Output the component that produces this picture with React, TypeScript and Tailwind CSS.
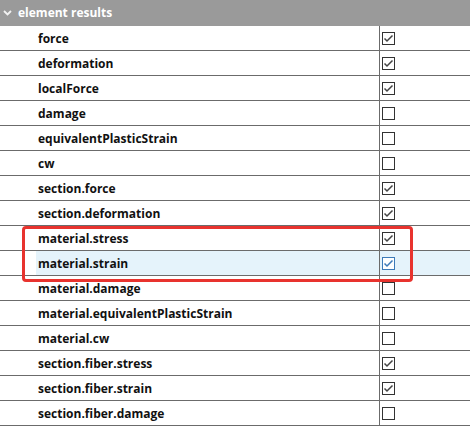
import React from "react";

const rows: { name: string; checked: boolean; selected?: boolean }[] = [
  { name: "force", checked: true },
  { name: "deformation", checked: true },
  { name: "localForce", checked: true },
  { name: "damage", checked: false },
  { name: "equivalentPlasticStrain", checked: false },
  { name: "cw", checked: false },
  { name: "section.force", checked: true },
  { name: "section.deformation", checked: true },
  { name: "material.stress", checked: true },
  { name: "material.strain", checked: true, selected: true },
  { name: "material.damage", checked: false },
  { name: "material.equivalentPlasticStrain", checked: false },
  { name: "material.cw", checked: false },
  { name: "section.fiber.stress", checked: true },
  { name: "section.fiber.strain", checked: true },
  { name: "section.fiber.damage", checked: false },
];

function Check({ checked, selected }: { checked: boolean; selected?: boolean }) {
  const border = selected ? "border-[#3d7ab8]" : "border-[#333333]";
  const stroke = selected ? "#3d7ab8" : "#444444";
  return (
    <div className={`w-[13px] h-[13px] border ${border} bg-white flex items-center justify-center`}>
      {checked && (
        <svg width="11" height="11" viewBox="0 0 11 11">
          <path d="M1.5 5.5 L4 8 L9.5 2.5" fill="none" stroke={stroke} strokeWidth="1.5" />
        </svg>
      )}
    </div>
  );
}

export default function App() {
  return (
    <div
      className="relative w-[470px] h-[426px] bg-white overflow-hidden"
      style={{ fontFamily: '"Open Sans", "Noto Sans", sans-serif' }}
    >
      <div className="h-[26px] bg-[#9a9a9a] flex items-center text-white font-bold text-[12px]">
        <svg width="18" height="26" viewBox="0 0 18 26" className="shrink-0">
          <path d="M4 11 L7.5 14.5 L11 11" fill="none" stroke="#f2f2f2" strokeWidth="1.8" />
        </svg>
        <span className="leading-none">element results</span>
      </div>
      {rows.map((r) => (
        <div key={r.name} className="h-[25px] flex border-b border-[#6b6b6b] text-[12px] font-bold text-[#111]">
          <div className="w-[379px] shrink-0 pl-[36px] flex">
            <div className={`flex-1 flex items-center pl-[2px] pt-[2px] ${r.selected ? "bg-[#e5f3fb]" : ""}`}>
              {r.name}
            </div>
          </div>
          <div className={`flex-1 border-l border-[#6b6b6b] flex items-center pl-[2px] pt-[1px] ${r.selected ? "bg-[#e5f3fb]" : ""}`}>
            <Check checked={r.checked} selected={r.selected} />
          </div>
        </div>
      ))}
      <div className="h-[2px] bg-[#efefef]" />
      <div className="absolute left-[22px] top-[226px] w-[391px] h-[56px] border-[3px] border-[#e8332e] rounded-[4px] pointer-events-none" />
    </div>
  );
}
